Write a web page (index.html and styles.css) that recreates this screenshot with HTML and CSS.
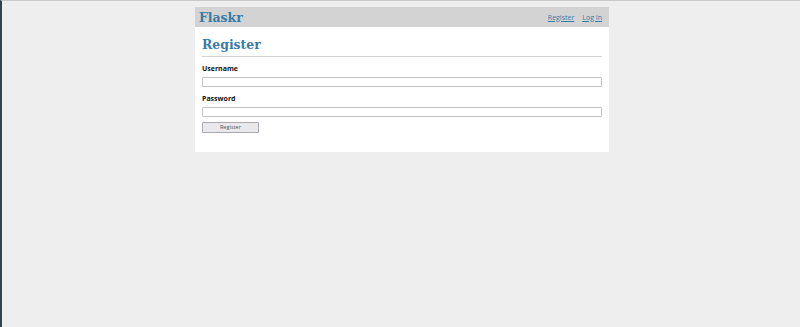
FILE: index.html
```html
<!DOCTYPE html>
<html lang="en">

<head>
  <meta charset="UTF-8" />
  <title>Register - Flaskr</title>
  <link rel="stylesheet" href="styles.css">
</head>

<body>

  <!-- Top navigation -->
  <nav>
    <h1><a href="#">Flaskr</a></h1>
    <ul>
      <li><a href="#">Register</a></li>
      <li><a href="#">Log In</a></li>
    </ul>
  </nav>

  <!-- Page content -->
  <section class="content">
    <header>
      <h1>Register</h1>
    </header>
    <form method="post">
      <label for="username">Username</label>
      <input name="username" id="username" required>
      <label for="password">Password</label>
      <input type="password" name="password" id="password" required>
      <input type="submit" value="Register">
    </form>
  </section>

</body>

</html>
```

FILE: styles.css
```css
* {
  box-sizing: border-box;
}

html {
  font-family: 'Open Sans', sans-serif;
  font-size: 7px;
  background: #eee;
  border-top: 1px solid #c9c9c9;
  border-left: 2px solid #34424c;
  padding: 6px 7px 7px 9px;
  min-height: 100vh;
}

body {
  max-width: 414px;
  margin: 0 auto;
  background: white;
}

h1 {
  font-family: 'DejaVu Serif Condensed', 'DejaVu Serif', serif;
  font-size: 13.8px;
  color: #377ba8;
  margin: 0;
}

a {
  color: #377ba8;
}

/* Navigation */
nav {
  background: lightgray;
  display: flex;
  align-items: center;
  height: 20px;
  padding: 0 3px 0 4px;
}

nav h1 {
  flex: auto;
  line-height: 20px;
}

nav h1 a {
  text-decoration: none;
}

nav ul {
  display: flex;
  list-style: none;
  margin: 0;
  padding: 0;
}

nav ul li a {
  display: block;
  padding: 4px;
}

/* Content */
.content {
  padding: 0 7px 7px;
}

.content > header {
  border-bottom: 1px solid lightgray;
  display: flex;
  align-items: flex-end;
}

.content > header h1 {
  flex: auto;
  line-height: 20px;
  margin: 7px 0 2px 0;
}

.content form {
  margin: 7px 0 5px;
  display: flex;
  flex-direction: column;
}

.content label {
  font-weight: bold;
  line-height: 9px;
  margin-bottom: 4px;
  color: #111;
}

.content input {
  height: 10px;
  margin: 0 0 7px;
  padding: 0;
  border: 1px solid #c2c2c6;
  border-radius: 1px;
  font-size: 6px;
}

input[type=submit] {
  align-self: start;
  width: 57px;
  height: 11px;
  margin-top: -2px;
  background: #e9e9ed;
  border: 1px solid #a9a9ad;
  color: #555;
  font-family: 'Open Sans', sans-serif;
  font-size: 5.6px;
  line-height: 9px;
}
```
